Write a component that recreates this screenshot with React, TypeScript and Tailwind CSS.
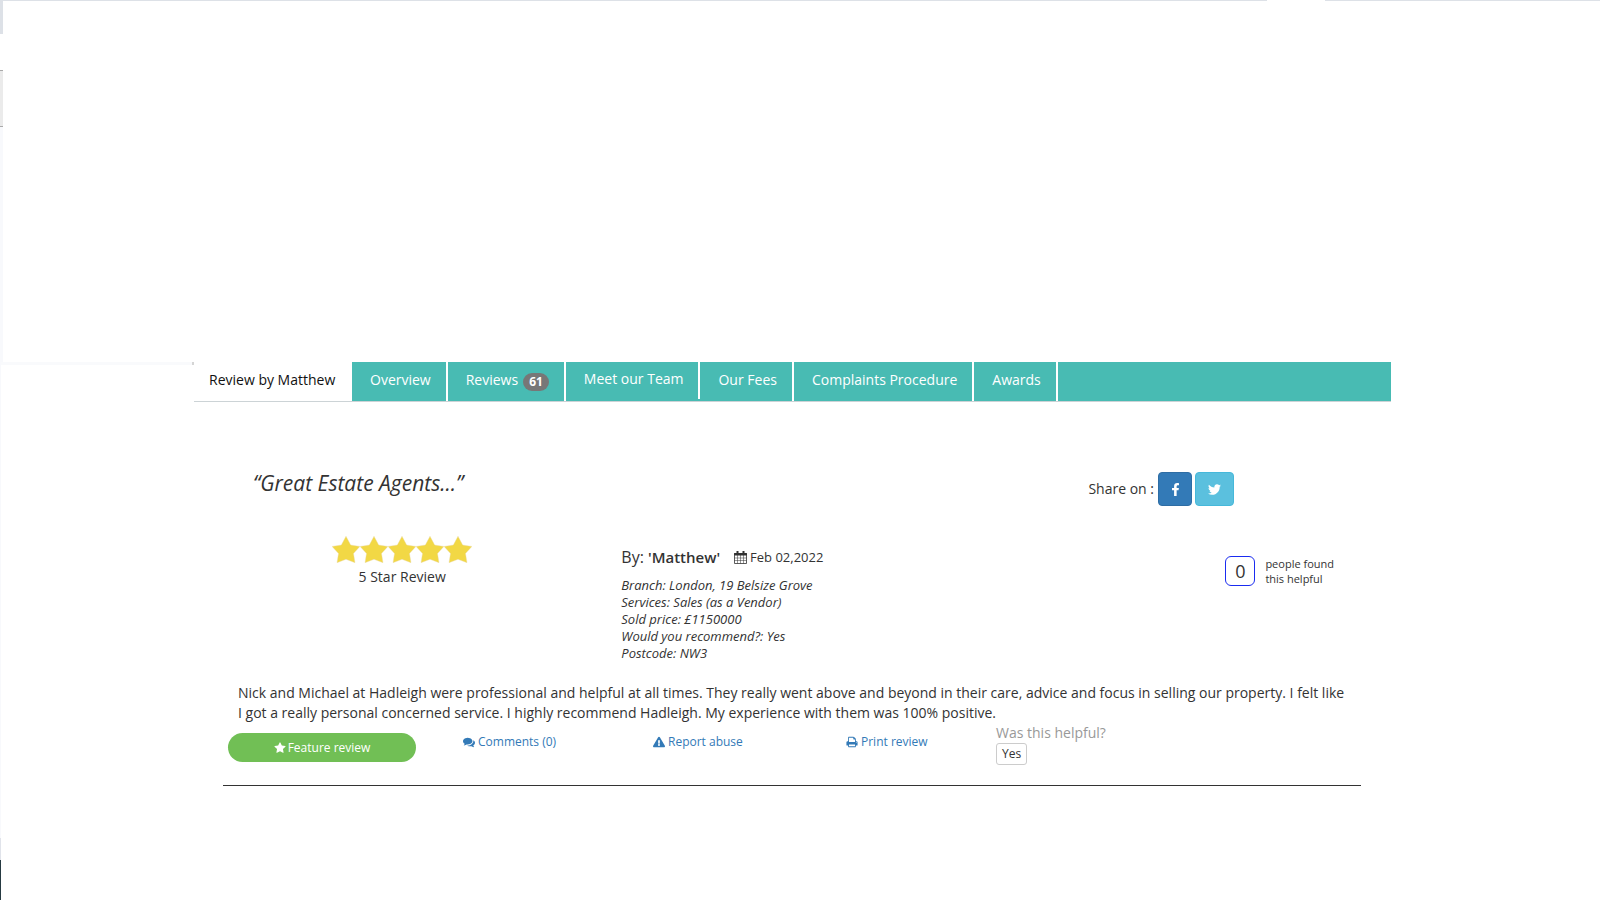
import React, { useState } from "react";
import { FaExclamationTriangle, FaFacebookF, FaTwitter } from "react-icons/fa";

const tabs = [
  { name: "Overview" },
  { name: "Reviews", count: 61 },
  { name: "Meet our Team", short: true },
  { name: "Our Fees" },
  { name: "Complaints Procedure" },
  { name: "Awards" },
];

const details = [
  "Branch: London, 19 Belsize Grove",
  "Services: Sales (as a Vendor)",
  "Sold price: £1150000",
  "Would you recommend?: Yes",
  "Postcode: NW3",
];

function StarIcon({ className }: { className?: string }) {
  return (
    <svg viewBox="0 0 1792 1792" fill="currentColor" className={className}>
      <path d="M1728 647q0 22-26 48l-363 354 86 500q1 7 1 20 0 21-10.5 35.5t-30.5 14.5q-19 0-40-12l-449-236-449 236q-22 12-40 12-21 0-31.5-14.5t-10.5-35.5q0-6 2-20l86-500-364-354q-25-27-25-48 0-37 56-46l502-73 225-455q19-41 49-41t49 41l225 455 502 73q56 9 56 46z" />
    </svg>
  );
}

function RatingStar() {
  return (
    <svg viewBox="0 0 28 27" className="h-[27px] w-7 fill-[#f2d845] stroke-[#ecdcae]" strokeWidth="0.4">
      <path d="M14 .3l4.700 8.700 9.200 1.400-6.400 7.100 1.500 9.200-9-3.400-9 3.400 1.500-9.200L.1 10.400l9.200-1.400z" />
    </svg>
  );
}

function CalendarIcon() {
  return (
    <svg viewBox="0 0 13 13" className="h-[13px] w-[13px]" fill="none" stroke="currentColor">
      <path d="M.5 2.500h12v10H.5z" strokeWidth="0.800" />
      <path d="M.5 2.500h12v1.500H.5z" fill="currentColor" />
      <path d="M3.500 0v3M9.500 0v3" strokeWidth="2" />
      <path d="M3.500 4v8.500M6.500 4v8.500M9.500 4v8.500M.5 7h12M.5 9.500h12" strokeWidth="0.500" />
    </svg>
  );
}

function CommentsIcon() {
  return (
    <svg viewBox="0 0 1792 1792" fill="currentColor" className="h-3 w-3">
      <path d="M1408 768q0 139-94 257t-256.500 186.500-353.500 68.500q-86 0-176-16-124 88-278 128-36 9-86 16h-3q-11 0-20.500-8t-11.500-21q-1-3-1-6.500t.5-6.500 2-6l2.500-5 3.500-5.500 4-5 4.500-5 4-4.500q5-6 23-25t26-29.500 22.500-29 25-38.500 20.500-44q-124-72-195-177t-71-224q0-139 94-257t256.500-186.500 353.500-68.500 353.500 68.500 256.500 186.500 94 257zm384 256q0 120-71 224.500t-195 176.500q10 24 20.500 44t25 38.500 22.500 29 26 29.500 23 25q1 1 4 4.500t4.500 5 4 5 3.500 5.500l2.500 5 2 6 .5 6.500-1 6.500q-3 14-13 22t-22 7q-50-7-86-16-154-40-278-128-90 16-176 16-271 0-472-132 58 4 88 4 161 0 309-45t264-129q125-92 192-212t67-254q0-77-23-152 129 71 204 178t75 230z" />
    </svg>
  );
}

function PrintIcon() {
  return (
    <svg viewBox="0 0 1792 1792" fill="currentColor" className="h-3 w-3">
      <path d="M448 1536h896v-256h-896v256zm0-640h896v-384h-160q-40 0-68-28t-28-68v-160h-640v640zm1152 64q0-26-19-45t-45-19-45 19-19 45 19 45 45 19 45-19 19-45zm128 0v416q0 13-9.500 22.500t-22.500 9.500h-224v160q0 40-28 68t-68 28h-960q-40 0-68-28t-28-68v-160h-224q-13 0-22.500-9.500t-9.500-22.500v-416q0-79 56.500-135.500t135.500-56.500h64v-544q0-40 28-68t68-28h672q40 0 88 20t76 48l152 152q28 28 48 76t20 88v256h64q79 0 135.500 56.500t56.500 135.500z" />
    </svg>
  );
}

function Tabs() {
  return (
    <nav className="flex h-10 border-b border-[#ccd3d6] bg-[#48bbb3] text-sm leading-5 text-white">
      <a href="#review" className="w-[158px] bg-white pt-2 pl-[15px] text-[#111]">
        Review by Matthew
      </a>
      {tabs.map((tab) => (
        <a
          key={tab.name}
          href="#tab"
          className={`flex items-start gap-[5px] border-r-2 border-white pr-[15px] pl-[18px] ${
            tab.short ? "h-[37px] pt-[7px]" : "h-[39px] pt-2"
          }`}
        >
          {tab.name}
          {tab.count && (
            <span className="mt-[3px] rounded-full bg-[#777] px-[6px] text-xs leading-[18px] font-bold">
              {tab.count}
            </span>
          )}
        </a>
      ))}
    </nav>
  );
}

function Review() {
  const [helpful, setHelpful] = useState(0);

  return (
    <article className="mt-[70px] mr-[30px] ml-[29px] border-b border-[#333] pb-5 text-sm leading-5 text-[#333]">
      <div className="flex items-start pr-[127px] pl-[30px]">
        <h1 className="flex-1 text-[21px] leading-[22px] italic">“Great Estate Agents...”</h1>
        <div className="flex items-center gap-[3px]">
          <span className="mr-px">Share on :</span>
          <button
            type="button"
            aria-label="Facebook"
            className="flex h-[34px] w-[34px] items-center justify-center rounded border border-[#2e6da4] bg-[#337ab7] text-white"
          >
            <FaFacebookF className="h-[13px] w-[13px]" />
          </button>
          <button
            type="button"
            aria-label="Twitter"
            className="flex h-[34px] w-[39px] items-center justify-center rounded border border-[#46b8da] bg-[#5bc0de] text-white"
          >
            <FaTwitter className="h-[13px] w-[13px]" />
          </button>
        </div>
      </div>

      <div className="mt-[30px] flex items-start">
        <div className="flex w-[35%] flex-col items-center pr-10">
          <div className="flex">
            {[1, 2, 3, 4, 5].map((n) => (
              <RatingStar key={n} />
            ))}
          </div>
          <p className="mt-1">5 Star Review</p>
        </div>
        <div className="flex-1 pt-[10px]">
          <div className="flex items-center text-base leading-[22px]">
            <span>By:&nbsp;</span>
            <b className="text-[15px] font-semibold">'Matthew'</b>
            <span className="ml-[14px] flex items-center gap-[3px] text-[13px]">
              <CalendarIcon />
              Feb 02,2022
            </span>
          </div>
          <ul className="mt-[9px] text-[13px] leading-[17px] italic">
            {details.map((line) => (
              <li key={line}>{line}</li>
            ))}
          </ul>
        </div>
        <div className="flex items-center gap-[10px] pt-5 pr-[27px]">
          <span className="flex h-[30px] w-[30px] items-center justify-center rounded-md border border-[#1a2cf0] text-lg">
            {helpful}
          </span>
          <p className="text-[11px] leading-[15px]">
            people found
            <br />
            this helpful
          </p>
        </div>
      </div>

      <p className="mt-[21px] px-[15px]">
        Nick and Michael at Hadleigh were professional and helpful at all times. They really went above and beyond in
        their care, advice and focus in selling our property. I felt like I got a really personal concerned service. I
        highly recommend Hadleigh. My experience with them was 100% positive.
      </p>

      <div className="grid grid-cols-[240fr_190fr_193fr_150fr_365fr] text-xs leading-[18px] text-[#337ab7]">
        <div className="pt-[10px] pl-[5px]">
          <button
            type="button"
            className="flex h-[29px] w-[188px] items-center justify-center gap-[2px] rounded-full bg-[#71bf55] text-white"
          >
            <StarIcon className="h-3 w-3" />
            Feature review
          </button>
        </div>
        <a href="#comments" className="flex items-center gap-[3px] self-start pt-[10px]">
          <CommentsIcon />
          Comments (0)
        </a>
        <a href="#report" className="flex items-center gap-[3px] self-start pt-[10px]">
          <FaExclamationTriangle className="h-3 w-3" />
          Report abuse
        </a>
        <a href="#print" className="flex items-center gap-[3px] self-start pt-[10px]">
          <PrintIcon />
          Print review
        </a>
        <div className="text-[#333]">
          <p className="text-sm leading-5 text-[#999]">Was this helpful?</p>
          <button
            type="button"
            className="h-[22px] rounded-[3px] border border-[#ccc] bg-white px-[5px] leading-[18px]"
            onClick={() => setHelpful(helpful + 1)}
          >
            Yes
          </button>
        </div>
      </div>
    </article>
  );
}

export default function App() {
  return (
    <div className="flex min-h-screen flex-col bg-white font-['Open_Sans',sans-serif]">
      <header className="h-[362px]">
        <div className="flex h-px">
          <div className="flex-1 bg-[#dde1e7]" />
          <div className="w-[58px]" />
          <div className="w-[275px] bg-[#dde1e7]" />
        </div>
        <div className="h-[33px] w-[3px] bg-[#dde1e7]" />
        <div className="mt-9 h-[57px] w-[3px] border-y border-[#aaa] bg-[#ebebeb]" />
        <div className="h-[235px] w-[3px] bg-[#f8f9fc]" />
      </header>
      <div className="flex flex-1">
        <div className="flex w-px flex-col">
          <div className="flex-1 bg-[#f8f9fc]" />
          <div className="h-[22px] bg-[#e0e3ea]" />
          <div className="h-10 bg-[#263a42]" />
        </div>
        <div className="h-[3px] w-[193px] border-r-2 border-[#d5d5d5] bg-[#f9fafc]" />
        <main className="mr-[209px] min-w-0 flex-1">
          <Tabs />
          <Review />
        </main>
      </div>
    </div>
  );
}
